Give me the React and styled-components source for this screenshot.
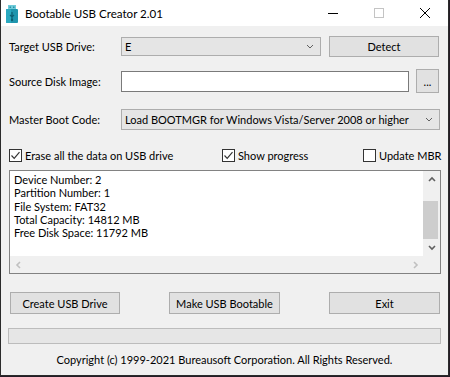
import React from 'react'
import styled, { createGlobalStyle } from 'styled-components'

const GlobalStyle = createGlobalStyle`
  html, body {
    margin: 0;
    padding: 0;
    background: #241c26;
  }
  body {
    font-family: Lato, "Noto Sans", sans-serif;
    font-size: 11px;
    color: #000;
    white-space: nowrap;
  }
`

const infoLines = [
  'Device Number: 2',
  'Partition Number: 1',
  'File System: FAT32',
  'Total Capacity: 14812 MB',
  'Free Disk Space: 11792 MB',
]

const UsbIcon = () => (
  <svg width="12" height="18" viewBox="0 0 12 18">
    <rect x="2" y="0" width="8" height="5" fill="#6fcbd9" />
    <rect x="3.5" y="1.5" width="1.5" height="1.5" fill="#2a8fa6" />
    <rect x="7" y="1.5" width="1.5" height="1.5" fill="#2a8fa6" />
    <rect x="0" y="4" width="12" height="14" rx="1" fill="#1f95ad" />
    <rect x="0" y="4" width="5" height="14" rx="1" fill="#2aa9c0" />
    <path d="M6 7 V15 M4 10 L6 12 L8 10" stroke="#0d5f72" strokeWidth="1.2" fill="none" />
    <circle cx="6" cy="15" r="1.2" fill="#0d5f72" />
  </svg>
)

const Chevron = ({ dir = 'down', color = '#606060', size = 8, weight = 1 }) => {
  const paths = {
    down: 'M1 2 L4 5 L7 2',
    up: 'M1 5 L4 2 L7 5',
    left: 'M5 1 L2 4 L5 7',
    right: 'M3 1 L6 4 L3 7',
  }
  return (
    <svg width={size} height={size} viewBox="0 0 8 8">
      <path d={paths[dir]} stroke={color} strokeWidth={weight} fill="none" />
    </svg>
  )
}

const CheckMark = () => (
  <svg width="11" height="11" viewBox="0 0 11 11">
    <path d="M1.5 5.5 L4.2 8.3 L9.5 2.2" stroke="#333" strokeWidth="1.2" fill="none" />
  </svg>
)

function CheckBox({ checked, label, width }) {
  return (
    <CheckItem $width={width}>
      <Box>{checked && <CheckMark />}</Box>
      <span>{label}</span>
    </CheckItem>
  )
}

export default function App() {
  return (
    <>
      <GlobalStyle />
      <Window>
        <TitleBar>
          <TitleIcon><UsbIcon /></TitleIcon>
          <Title>Bootable USB Creator 2.01</Title>
          <CaptionButton>
            <svg width="10" height="10" viewBox="0 0 10 10">
              <path d="M0 5.5 H10" stroke="#000" strokeWidth="1" />
            </svg>
          </CaptionButton>
          <CaptionButton>
            <svg width="10" height="10" viewBox="0 0 10 10">
              <rect x="0.5" y="0.5" width="9" height="9" stroke="#c4c4c4" fill="none" />
            </svg>
          </CaptionButton>
          <CaptionButton>
            <svg width="10" height="10" viewBox="0 0 10 10">
              <path d="M0 0 L10 10 M10 0 L0 10" stroke="#000" strokeWidth="1" />
            </svg>
          </CaptionButton>
        </TitleBar>

        <Body>
          <Row $mt={10} $h={21}>
            <Label>Target USB Drive:</Label>
            <Combo $w={200} $h={19}>
              <span>E</span>
              <Chevron />
            </Combo>
            <Button $w={110} $h={21} $ml={8}>Detect</Button>
          </Row>

          <Row $mt={12} $h={24}>
            <Label>Source Disk Image:</Label>
            <TextInput />
            <Button $w={23} $h={24} $ml={7}>...</Button>
          </Row>

          <Row $mt={16} $h={21}>
            <Label>Master Boot Code:</Label>
            <Combo $w={319} $h={21}>
              <span>Load BOOTMGR for Windows Vista/Server 2008 or higher</span>
              <Chevron />
            </Combo>
          </Row>

          <Row $mt={18} $h={15}>
            <CheckBox checked label="Erase all the data on USB drive" width={213} />
            <CheckBox checked label="Show progress" width={141} />
            <CheckBox label="Update MBR" />
          </Row>

          <InfoBox>
            <InfoText>
              {infoLines.map((line) => (
                <div key={line}>{line}</div>
              ))}
            </InfoText>
            <VScroll>
              <ArrowCell><Chevron dir="up" weight={1.6} /></ArrowCell>
              <Track>
                <Thumb />
              </Track>
              <ArrowCell><Chevron dir="down" weight={1.6} /></ArrowCell>
            </VScroll>
            <HScroll>
              <ArrowCell><Chevron dir="left" color="#c0c0c0" weight={1.6} /></ArrowCell>
              <ArrowCell><Chevron dir="right" color="#c0c0c0" weight={1.6} /></ArrowCell>
            </HScroll>
            <Corner />
          </InfoBox>

          <ButtonRow>
            <Button $w={110} $h={22}>Create USB Drive</Button>
            <Button $w={111} $h={22}>Make USB Bootable</Button>
            <Button $w={111} $h={22}>Exit</Button>
          </ButtonRow>

          <Progress />

          <Copyright>Copyright (c) 1999-2021 Bureausoft Corporation. All Rights Reserved.</Copyright>
        </Body>
      </Window>
    </>
  )
}

const Window = styled.div`
  width: 449px;
  height: 376px;
  box-sizing: border-box;
  border-left: 1px solid #2b2b2b;
  border-right: 1px solid #2b2b2b;
  border-bottom: 1px solid #2b2b2b;
  display: flex;
  flex-direction: column;
  background: #f0f0f0;
`
const TitleBar = styled.div`
  height: 26px;
  background: #fff;
  display: flex;
  align-items: center;
`
const TitleIcon = styled.div`
  width: 12px;
  height: 18px;
  margin-left: 5px;
  margin-top: 1px;
`
const Title = styled.div`
  margin-left: 7px;
  flex: 1;
  font-size: 11.6px;
  color: #000;
`
const CaptionButton = styled.div`
  width: 46px;
  height: 26px;
  display: flex;
  align-items: center;
  justify-content: center;
`
const Body = styled.div`
  flex: 1;
  display: flex;
  flex-direction: column;
  padding: 0 8px;
`
const Row = styled.div`
  display: flex;
  align-items: center;
  margin-top: ${p => p.$mt}px;
  height: ${p => p.$h}px;
`
const Label = styled.div`
  width: 112px;
  flex-shrink: 0;
`
const Combo = styled.div`
  width: ${p => p.$w}px;
  height: ${p => p.$h}px;
  box-sizing: border-box;
  border: 1px solid #adadad;
  background: #e5e5e5;
  display: flex;
  align-items: center;
  justify-content: space-between;
  padding: 0 6px 0 3px;
  svg { margin-top: 1px; }
`
const Button = styled.div`
  width: ${p => p.$w}px;
  height: ${p => p.$h}px;
  margin-left: ${p => p.$ml || 0}px;
  box-sizing: border-box;
  border: 1px solid #adadad;
  background: #e1e1e1;
  display: flex;
  align-items: center;
  justify-content: center;
  flex-shrink: 0;
`
const TextInput = styled.div`
  width: 288px;
  height: 21px;
  box-sizing: border-box;
  border: 1px solid #7a7a7a;
  background: #fff;
`
const CheckItem = styled.div`
  display: flex;
  align-items: center;
  flex-shrink: 0;
  width: ${p => (p.$width ? `${p.$width}px` : 'auto')};
  span { margin-left: 3px; }
`
const Box = styled.div`
  width: 13px;
  height: 13px;
  box-sizing: border-box;
  border: 1px solid #333;
  background: #fff;
  display: flex;
  align-items: center;
  justify-content: center;
`
const InfoBox = styled.div`
  margin-top: 7px;
  width: 432px;
  height: 104px;
  box-sizing: border-box;
  border: 1px solid #828282;
  display: grid;
  grid-template-columns: 1fr 17px;
  grid-template-rows: 1fr 17px;
`
const InfoText = styled.div`
  background: #fff;
  padding: 2px 4px;
  line-height: 13.3px;
  overflow: hidden;
`
const VScroll = styled.div`
  background: #f0f0f0;
  display: flex;
  flex-direction: column;
`
const ArrowCell = styled.div`
  width: 17px;
  height: 17px;
  display: flex;
  align-items: center;
  justify-content: center;
`
const Track = styled.div`
  flex: 1;
  display: flex;
  flex-direction: column;
  justify-content: flex-end;
`
const Thumb = styled.div`
  height: 38px;
  width: 15px;
  background: #cdcdcd;
`
const HScroll = styled.div`
  background: #f0f0f0;
  display: flex;
  justify-content: space-between;
`
const Corner = styled.div`
  background: #f0f0f0;
`
const ButtonRow = styled.div`
  margin-top: 18px;
  padding-left: 1px;
  display: flex;
  justify-content: space-between;
`
const Progress = styled.div`
  margin: 14px 0 0 -1px;
  width: 433px;
  height: 16px;
  box-sizing: border-box;
  border: 1px solid #bcbcbc;
  background: #e6e6e6;
`
const Copyright = styled.div`
  margin-top: 8px;
  text-align: center;
  line-height: 16px;
`
